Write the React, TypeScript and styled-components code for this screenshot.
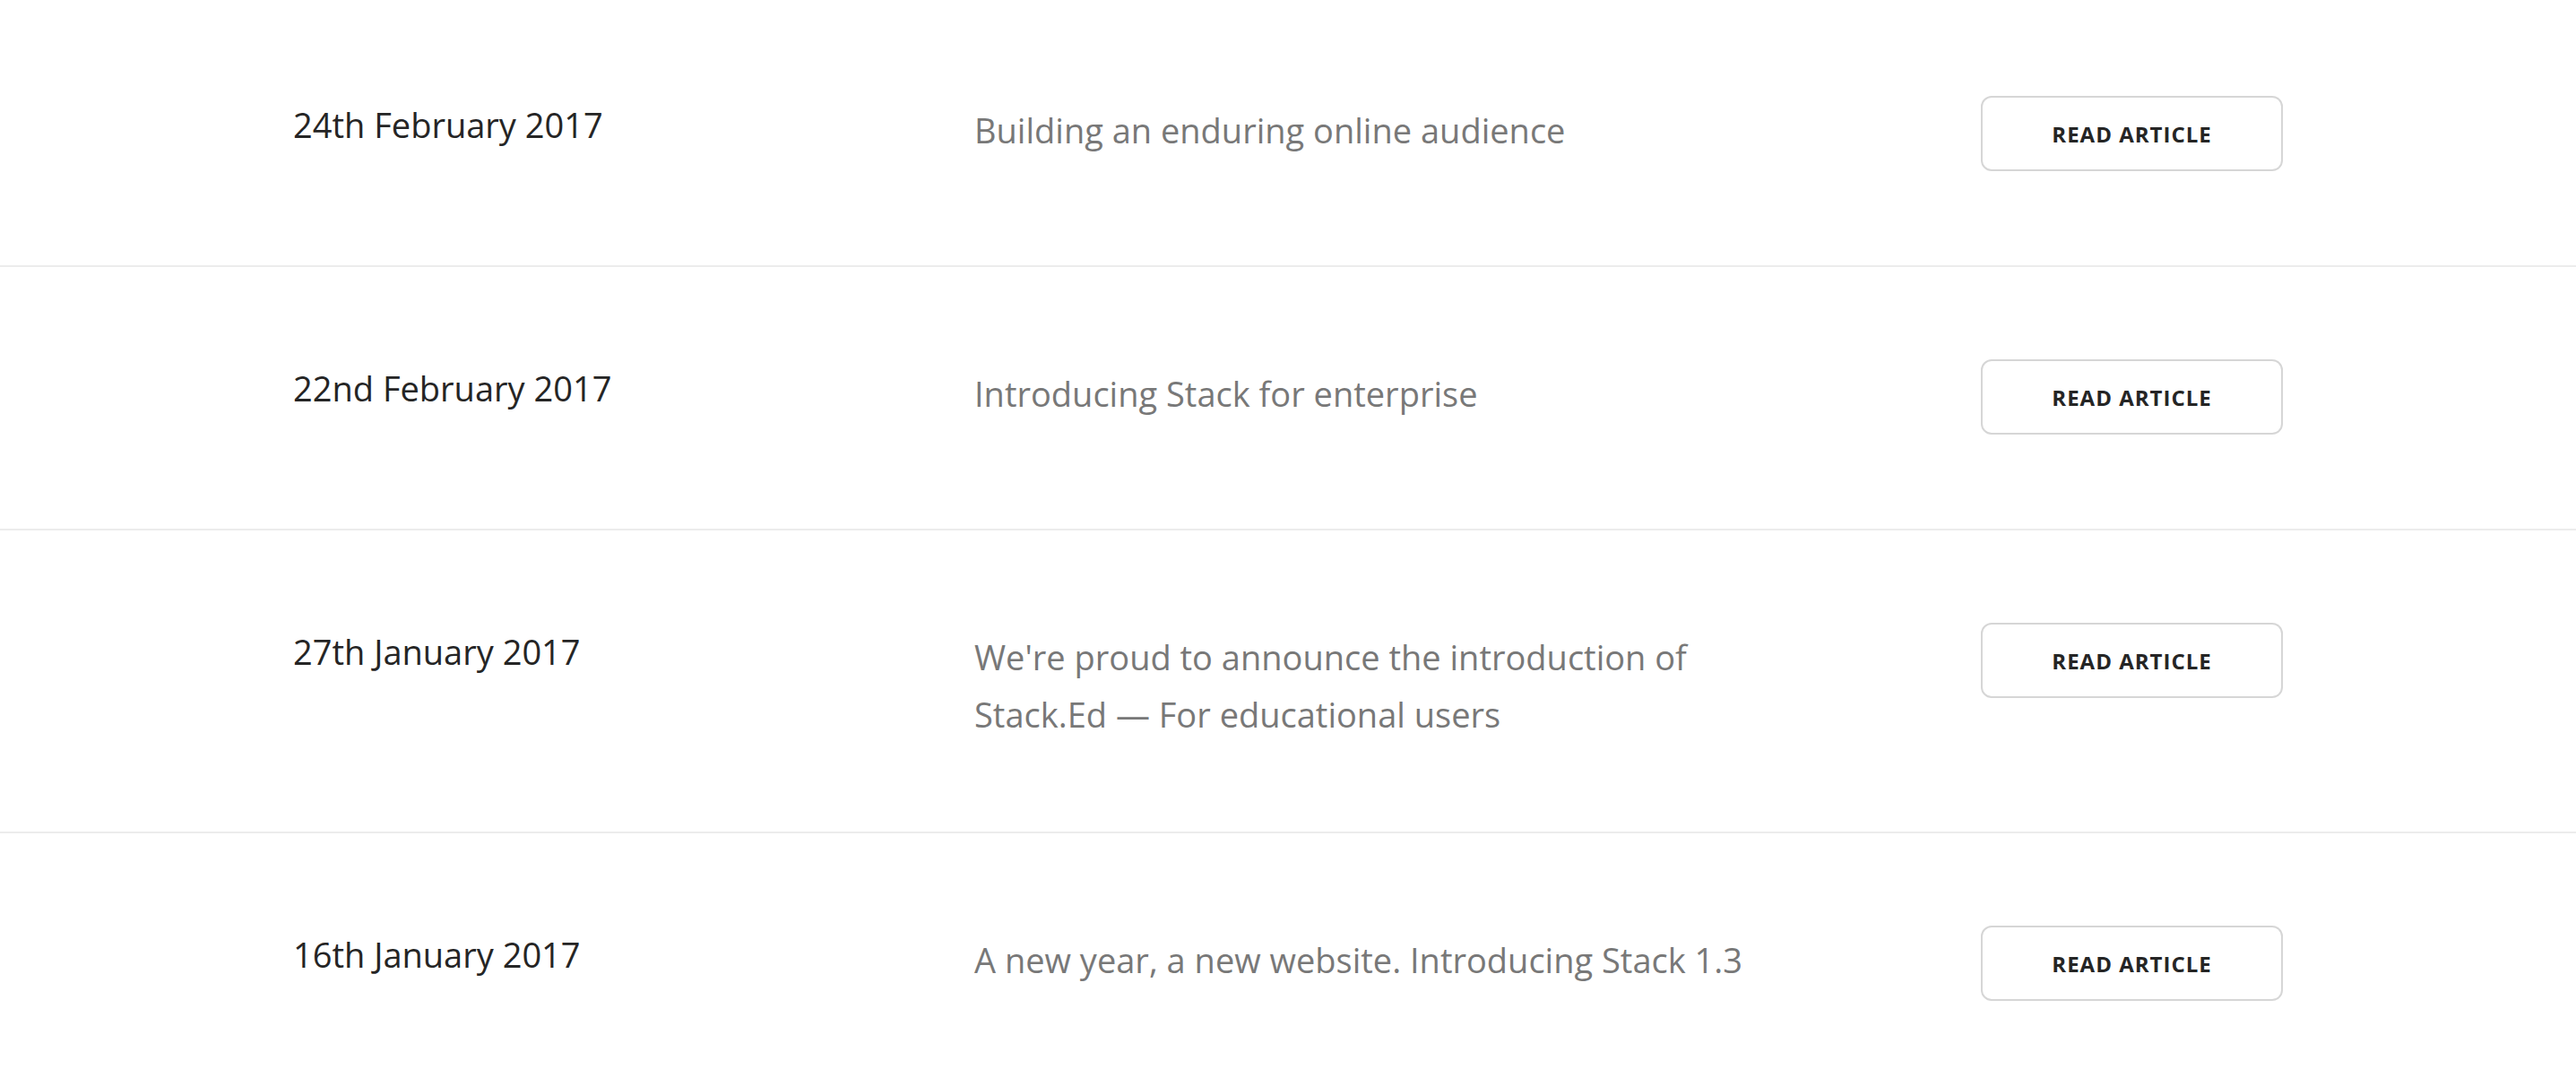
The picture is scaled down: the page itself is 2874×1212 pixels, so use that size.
import React from "react";
import styled, { createGlobalStyle } from "styled-components";

const GlobalStyle = createGlobalStyle`
  html, body {
    margin: 0;
    padding: 0;
    background: #ffffff;
  }
  body {
    font-family: "Open Sans", "Liberation Sans", sans-serif;
    -webkit-font-smoothing: antialiased;
  }
`;

const List = styled.section`
  padding-top: 4px;
`;

const Row = styled.article`
  padding: 103px 0 96px;
  border-bottom: 2px solid #ececec;
`;

const Inner = styled.div`
  width: 2220px;
  margin: 0 auto;
  display: grid;
  grid-template-columns: 700px 890px 1fr;
  column-gap: 60px;
  align-items: start;
`;

const DateText = styled.span`
  font-size: 38px;
  line-height: 64px;
  color: #252525;
  font-weight: 400;
`;

const Description = styled.p`
  margin: 0;
  padding: 6px 0 3px;
  font-size: 38px;
  line-height: 64px;
  color: #787878;
  font-weight: 400;
`;

const ReadButton = styled.a`
  justify-self: end;
  box-sizing: border-box;
  width: 337px;
  height: 84px;
  margin-bottom: 9px;
  display: flex;
  align-items: center;
  justify-content: center;
  border: 2px solid #d6d6d6;
  border-radius: 12px;
  font-size: 24px;
  font-weight: 700;
  letter-spacing: 1px;
  color: #252525;
  text-decoration: none;
  text-transform: uppercase;
`;

const articles = [
  { date: "24th February 2017", title: "Building an enduring online audience" },
  { date: "22nd February 2017", title: "Introducing Stack for enterprise" },
  {
    date: "27th January 2017",
    title: "We're proud to announce the introduction of Stack.Ed \u2014 For educational users",
  },
  { date: "16th January 2017", title: "A new year, a new website. Introducing Stack 1.3" },
];

export default function App() {
  return (
    <>
      <GlobalStyle />
      <List>
        {articles.map((a) => (
          <Row key={a.date}>
            <Inner>
              <DateText>{a.date}</DateText>
              <Description>{a.title}</Description>
              <ReadButton href="#">Read Article</ReadButton>
            </Inner>
          </Row>
        ))}
      </List>
    </>
  );
}
